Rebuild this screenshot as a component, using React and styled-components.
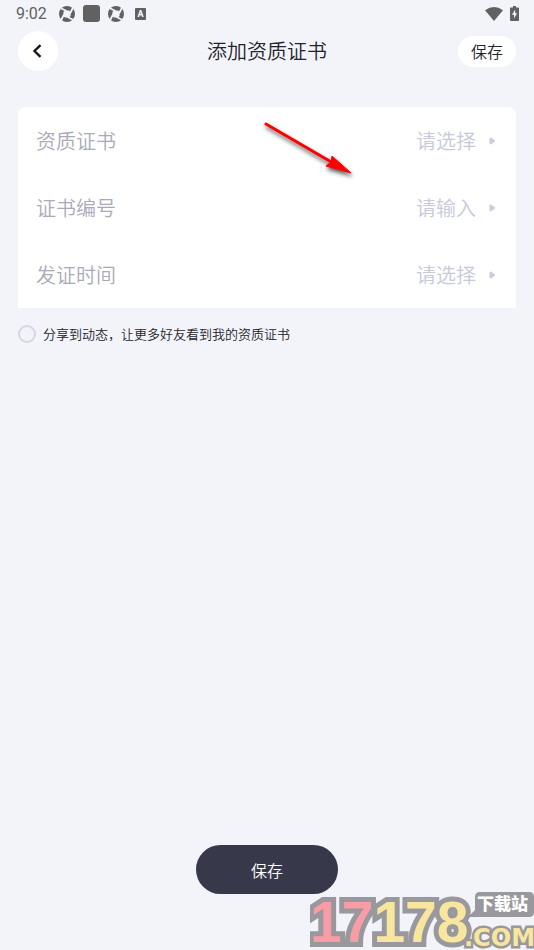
import React from 'react';
import styled, { createGlobalStyle } from 'styled-components';

const GlobalStyle = createGlobalStyle`
  * { box-sizing: border-box; }
  body { margin: 0; background: #f3f4fa; }
  button, input, select { font: inherit; border: 0; margin: 0; padding: 0; background: none; }
`;

const Page = styled.div`
  position: relative;
  display: flex;
  flex-direction: column;
  min-height: 100vh;
  overflow: hidden;
  background: #f3f4fa;
  color: #23232b;
  font-family: "Noto Sans CJK SC", sans-serif;
  font-size: 20px;
  font-weight: 350;
`;

const StatusBar = styled.div`
  display: flex;
  align-items: center;
  justify-content: space-between;
  height: 27px;
  padding: 0 15px 0 16px;
  color: #616161;
`;

const StatusGroup = styled.div`
  display: flex;
  align-items: center;
  gap: ${({ $gap }) => $gap}px;
`;

const Clock = styled.time`
  margin-right: 4px;
  font-family: Roboto, sans-serif;
  font-size: 16px;
  font-weight: 400;
  line-height: 27px;
`;

const Icon = styled.svg`
  display: block;
  flex: none;
`;

const Header = styled.header`
  display: grid;
  grid-template-columns: 1fr auto 1fr;
  align-items: center;
  padding: 4px 18px 0;
`;

const BackButton = styled.button`
  display: flex;
  align-items: center;
  justify-content: center;
  width: 40px;
  height: 40px;
  border-radius: 50%;
  background: #fff;
  cursor: pointer;
`;

const Title = styled.h1`
  margin: 0;
  font-size: 20px;
  font-weight: inherit;
  line-height: 40px;
`;

const HeaderSave = styled.button`
  justify-self: end;
  width: 58px;
  height: 31px;
  border-radius: 16px;
  background: #fff;
  color: #23232b;
  font-size: 16px;
  line-height: 31px;
  cursor: pointer;
`;

const Card = styled.section`
  position: relative;
  margin: 36px 18px 0;
  border-radius: 8px 8px 0 0;
  background: #fff;
`;

const Row = styled.div`
  display: flex;
  align-items: center;
  height: 67px;
  padding: 0 20px 0 18px;
`;

const RowLabel = styled.label`
  flex: none;
  color: #a9aab8;
`;

const valueStyle = `
  flex: 1;
  min-width: 0;
  height: 40px;
  margin: 0 13px 0 16px;
  color: #c6c9d8;
  outline: 0;
  text-align: right;
`;

const RowSelect = styled.select`
  && { ${valueStyle} }
  appearance: none;
  text-align-last: right;
`;

const RowInput = styled.input`
  && { ${valueStyle} }
  &::placeholder { color: #c6c9d8; opacity: 1; }
`;

const RowButton = styled.button`
  && { ${valueStyle} }
`;

const ShareLabel = styled.label`
  display: flex;
  align-items: center;
  gap: 7px;
  margin: 16px 18px 0;
  font-size: 13px;
  line-height: 20px;
`;

const ShareCheck = styled.input`
  flex: none;
  width: 18px;
  height: 18px;
  appearance: none;
  && { border: 2px solid #d5d6e2; }
  border-radius: 50%;
  &:checked { background: #38384b; }
`;

const Footer = styled.footer`
  display: flex;
  justify-content: center;
  margin-top: auto;
  padding: 24px 18px 56px;
`;

const SaveButton = styled.button`
  width: 142px;
  height: 49px;
  border-radius: 25px;
  background: #38384b;
  color: #fff;
  font-size: 16px;
  cursor: pointer;
`;

const Pointer = styled.svg`
  position: absolute;
  top: 7px;
  left: 50%;
  margin-left: -10px;
  pointer-events: none;
  filter: drop-shadow(1px 3px 2px rgba(0, 0, 0, 0.65));
`;

const Watermark = styled.svg`
  position: absolute;
  right: 0;
  bottom: 0;
  pointer-events: none;
`;

function Shutter() {
  return (
    <Icon width="16" height="16" viewBox="0 0 16 16" aria-hidden="true">
      <circle cx="8" cy="8" r="8" fill="#616161" />
      <path d="M6 4.4H10L11.6 6V10L10 11.6H6L4.4 10V6Z" fill="#f3f4fa" />
      <path d="M7.5 5L2 2.2M11 7.5L13.8 2M8.5 11L14 13.8M5 8.5L2.2 14" stroke="#f3f4fa" strokeWidth="1.8" />
    </Icon>
  );
}

function Caret() {
  return (
    <Icon width="7" height="8" viewBox="0 0 7 8" aria-hidden="true">
      <path d="M1 1.2V6.8H2.4L5.8 4L2.4 1.2Z" fill="#c9ccdc" stroke="#c9ccdc" strokeLinejoin="round" />
    </Icon>
  );
}

function SiteMark() {
  return (
    <Watermark width="224" height="60" viewBox="0 0 224 60" role="img" aria-label="17178.com 下载站">
      <text x="0" y="52" fontFamily="Liberation Sans, sans-serif" fontWeight="700" fontSize="57" paintOrder="stroke" strokeWidth="10" stroke="#99999d">
        <tspan fill="#f99ca6">17</tspan>
        <tspan fill="#f8e69e">178</tspan>
      </text>
      <path d="M158 27L165 20V7Q165 2 170 2H219Q224 2 224 7V22Q224 27 219 27Z" fill="#99999d" />
      <text x="167" y="20" fontFamily="Noto Sans CJK SC, sans-serif" fontWeight="900" fontSize="17" fill="#fff">下载站</text>
      <text x="154" y="56" fontFamily="DejaVu Sans, sans-serif" fontWeight="700" fontSize="24" fill="#f8e69e" stroke="#99999d" strokeWidth="5" paintOrder="stroke">.COM</text>
    </Watermark>
  );
}

export default function App() {
  return (
    <Page>
      <GlobalStyle />
      <StatusBar>
        <StatusGroup $gap={8}>
          <Clock>9:02</Clock>
          <Shutter />
          <Icon width="17" height="17" viewBox="0 0 17 17" aria-hidden="true">
            <rect width="17" height="17" rx="3" fill="#616161" />
          </Icon>
          <Shutter />
          <Icon width="17" height="12" viewBox="0 0 17 12" aria-hidden="true">
            <rect x="3" width="11" height="12" rx="1" fill="#616161" />
            <text x="8.5" y="9" textAnchor="middle" fontFamily="Roboto, sans-serif" fontWeight="700" fontSize="9" fill="#fff">A</text>
          </Icon>
        </StatusGroup>
        <StatusGroup $gap={7}>
          <Icon width="18" height="14" viewBox="0 0 18 14" aria-hidden="true">
            <path d="M0 3.2Q9-3 18 3.2L9 14Z" fill="#616161" />
          </Icon>
          <Icon width="9" height="15" viewBox="0 0 9 15" aria-hidden="true">
            <path d="M3 0H6V1.5H8Q9 1.5 9 2.5V14Q9 15 8 15H1Q0 15 0 14V2.5Q0 1.5 1 1.5H3Z" fill="#616161" />
            <path d="M5.2 3.5L2 8.8H4V12.6L7 7.3H5.2Z" fill="#f3f4fa" />
          </Icon>
        </StatusGroup>
      </StatusBar>
      <Header>
        <BackButton type="button" aria-label="返回">
          <Icon width="12" height="14" viewBox="0 0 12 14" aria-hidden="true">
            <path d="M8.5 1.2L2.5 7L8.5 12.8" fill="none" stroke="#15151f" strokeWidth="2.4" />
          </Icon>
        </BackButton>
        <Title>添加资质证书</Title>
        <HeaderSave type="button">保存</HeaderSave>
      </Header>
      <Card>
        <Row>
          <RowLabel htmlFor="certificate">资质证书</RowLabel>
          <RowSelect id="certificate" defaultValue="">
            <option value="">请选择</option>
          </RowSelect>
          <Caret />
        </Row>
        <Row>
          <RowLabel htmlFor="number">证书编号</RowLabel>
          <RowInput id="number" type="text" placeholder="请输入" />
          <Caret />
        </Row>
        <Row>
          <RowLabel htmlFor="issued">发证时间</RowLabel>
          <RowButton id="issued" type="button">请选择</RowButton>
          <Caret />
        </Row>
        <Pointer width="96" height="64" viewBox="0 0 96 64" aria-hidden="true">
          <path d="M9 10L76 49" stroke="#f00" strokeWidth="3" strokeLinecap="round" />
          <path d="M94 59L69 52L74 48L75 42Z" fill="#f00" stroke="#f00" strokeLinejoin="round" />
        </Pointer>
      </Card>
      <ShareLabel>
        <ShareCheck type="checkbox" />
        分享到动态，让更多好友看到我的资质证书
      </ShareLabel>
      <Footer>
        <SaveButton type="button">保存</SaveButton>
      </Footer>
      <SiteMark />
    </Page>
  );
}
